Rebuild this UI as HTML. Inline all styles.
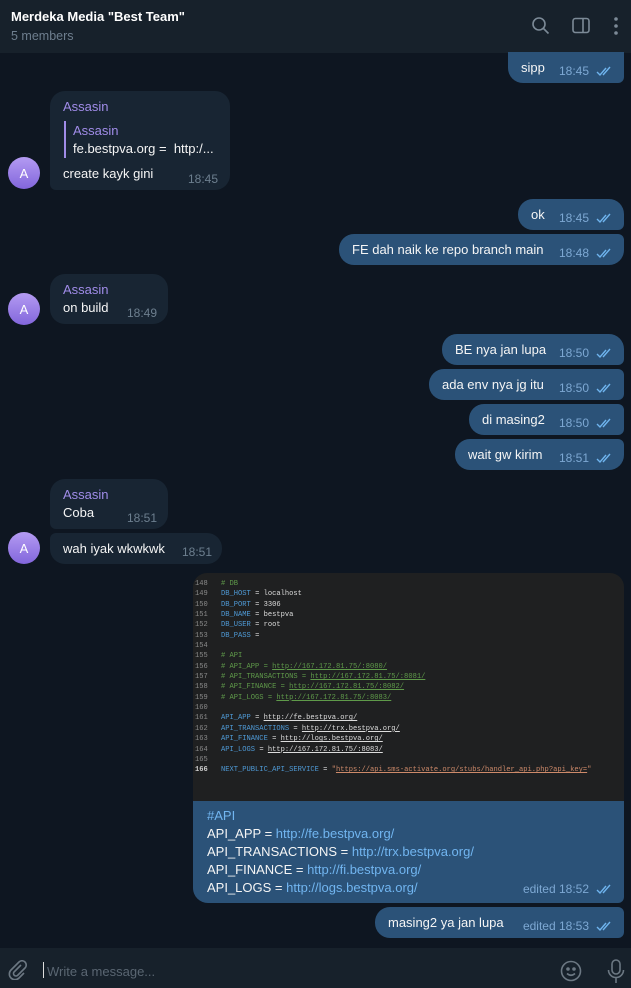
<!DOCTYPE html>
<html><head><meta charset="utf-8"><style>
*{margin:0;padding:0;box-sizing:border-box}
body{width:631px;height:988px;background:#0e1621;font-family:"Liberation Sans",sans-serif;position:relative;overflow:hidden;color:#f5f5f5}
.hdr{position:absolute;left:0;top:0;width:631px;height:53px;background:#17212b}
.b{position:absolute;height:31px;display:flex;align-items:center;font-size:13px;padding:0 10px 0 13px}
.out{background:#2b5278;border-radius:15px 6px 6px 15px;right:7px}
.in{background:#182533;border-radius:6px 15px 15px 6px;left:50px}
.t{margin-left:auto;font-size:12px;padding-top:7px;white-space:nowrap}
.out .t{color:#7da8d3}
.in .t{color:#6d7f8f}
.ck{margin-left:7px;margin-top:7px;width:18px;height:12px;flex:none}
.nm{color:#a08ce8;font-size:13px;position:absolute}
.av{position:absolute;left:8px;width:32px;height:32px;border-radius:50%;background:linear-gradient(#b49bf2,#8266dc);color:#fff;font-size:13px;display:flex;align-items:center;justify-content:center}
.code{position:absolute;left:193px;top:573px;width:431px;height:228px;background:#1f2021;border-radius:14px 14px 0 0;overflow:hidden;font-family:"Liberation Mono",monospace;font-size:7.1px;line-height:10.35px;padding-top:6px;white-space:pre}
.ln{position:absolute;left:2px;color:#8a8a8a}
.cd{position:absolute;left:28px;color:#ddd}
.k{color:#4f9ad6}.c{color:#5f9a4a}.u{text-decoration:underline}.s{color:#ce8a6a}
.cap{position:absolute;left:193px;top:801px;width:431px;height:102px;background:#2b5278;border-radius:0 0 6px 15px;font-size:13px;line-height:18px;padding:6px 14px}
.lk{color:#71b5f0}
</style></head><body>
<div class="hdr">
<div style="position:absolute;left:11px;top:9px;font-size:13px;font-weight:bold;color:#fff">Merdeka Media "Best Team"</div>
<div style="position:absolute;left:11px;top:29px;font-size:12.5px;color:#6e7e8e">5 members</div>
<svg style="position:absolute;left:531px;top:16px" width="20" height="20" viewBox="0 0 20 20" fill="none" stroke="#7c8a97" stroke-width="1.6"><circle cx="8" cy="8" r="6"/><path d="M12.5 12.5L17.5 17.5"/></svg>
<svg style="position:absolute;left:571px;top:16px" width="20" height="20" viewBox="0 0 20 20" fill="none" stroke="#7c8a97" stroke-width="1.6"><rect x="2" y="2.5" width="16" height="14" rx="2.5"/><path d="M12 2.5V16.5"/></svg>
<svg style="position:absolute;left:612px;top:16px" width="8" height="20" viewBox="0 0 8 20" fill="#7c8a97"><circle cx="4" cy="3" r="1.8"/><circle cx="4" cy="10" r="1.8"/><circle cx="4" cy="17" r="1.8"/></svg>
</div>

<div class="b out" style="top:52px;left:508px;border-radius:0 0 6px 15px">sipp<span class="t">18:45</span><svg class="ck" viewBox="0 0 18 12"><path d="M1 7l3 3L10 3M7 10L14 2" stroke="#6fb4ee" stroke-width="1.4" fill="none"/></svg></div>

<div class="in" style="position:absolute;top:91px;left:50px;width:180px;height:99px;border-radius:15px 15px 15px 6px">
<div class="nm" style="left:13px;top:8px">Assasin</div>
<div style="position:absolute;left:14px;top:30px;width:2px;height:37px;background:#a08ce8"></div>
<div class="nm" style="left:23px;top:32px">Assasin</div>
<div style="position:absolute;left:23px;top:50px;font-size:13px">fe.bestpva.org =&nbsp; http:/...</div>
<div style="position:absolute;left:13px;top:75px;font-size:13px">create kayk gini</div>
<div style="position:absolute;left:138px;top:81px;font-size:12px;color:#6d7f8f">18:45</div>
</div>
<div class="av" style="top:157px">A</div>

<div class="b out" style="top:199px;left:518px;border-radius:15px 15px 6px 15px">ok<span class="t">18:45</span><svg class="ck" viewBox="0 0 18 12"><path d="M1 7l3 3L10 3M7 10L14 2" stroke="#6fb4ee" stroke-width="1.4" fill="none"/></svg></div>
<div class="b out" style="top:234px;left:339px;border-radius:15px 6px 15px 15px">FE dah naik ke repo branch main<span class="t">18:48</span><svg class="ck" viewBox="0 0 18 12"><path d="M1 7l3 3L10 3M7 10L14 2" stroke="#6fb4ee" stroke-width="1.4" fill="none"/></svg></div>

<div class="in" style="position:absolute;top:274px;left:50px;width:118px;height:50px;border-radius:15px">
<div class="nm" style="left:13px;top:8px">Assasin</div>
<div style="position:absolute;left:13px;top:26px;font-size:13px">on build</div>
<div style="position:absolute;left:77px;top:32px;font-size:12px;color:#6d7f8f">18:49</div>
</div>
<div class="av" style="top:293px">A</div>

<div class="b out" style="top:334px;left:442px;border-radius:15px 15px 6px 15px">BE nya jan lupa<span class="t">18:50</span><svg class="ck" viewBox="0 0 18 12"><path d="M1 7l3 3L10 3M7 10L14 2" stroke="#6fb4ee" stroke-width="1.4" fill="none"/></svg></div>
<div class="b out" style="top:369px;left:429px">ada env nya jg itu<span class="t">18:50</span><svg class="ck" viewBox="0 0 18 12"><path d="M1 7l3 3L10 3M7 10L14 2" stroke="#6fb4ee" stroke-width="1.4" fill="none"/></svg></div>
<div class="b out" style="top:404px;left:469px">di masing2<span class="t">18:50</span><svg class="ck" viewBox="0 0 18 12"><path d="M1 7l3 3L10 3M7 10L14 2" stroke="#6fb4ee" stroke-width="1.4" fill="none"/></svg></div>
<div class="b out" style="top:439px;left:455px;border-radius:15px 6px 15px 15px">wait gw kirim<span class="t">18:51</span><svg class="ck" viewBox="0 0 18 12"><path d="M1 7l3 3L10 3M7 10L14 2" stroke="#6fb4ee" stroke-width="1.4" fill="none"/></svg></div>

<div class="in" style="position:absolute;top:479px;left:50px;width:118px;height:50px;border-radius:15px 15px 15px 6px">
<div class="nm" style="left:13px;top:8px">Assasin</div>
<div style="position:absolute;left:13px;top:26px;font-size:13px">Coba</div>
<div style="position:absolute;left:77px;top:32px;font-size:12px;color:#6d7f8f">18:51</div>
</div>
<div class="b in" style="top:533px;width:172px;border-radius:6px 15px 15px 15px">wah iyak wkwkwk<span class="t">18:51</span></div>
<div class="av" style="top:532px">A</div>

<div class="code"><div class="ln">148
149
150
151
152
153
154
155
156
157
158
159
160
161
162
163
164
165
<b style="color:#ccc">166</b></div><div class="cd"><span class="c"># DB</span>
<span class="k">DB_HOST</span> = localhost
<span class="k">DB_PORT</span> = 3306
<span class="k">DB_NAME</span> = bestpva
<span class="k">DB_USER</span> = root
<span class="k">DB_PASS</span> =

<span class="c"># API</span>
<span class="c"># API_APP = <span class="u">http://167.172.81.75/:8080/</span></span>
<span class="c"># API_TRANSACTIONS = <span class="u">http://167.172.81.75/:8081/</span></span>
<span class="c"># API_FINANCE = <span class="u">http://167.172.81.75/:8082/</span></span>
<span class="c"># API_LOGS = <span class="u">http://167.172.81.75/:8083/</span></span>

<span class="k">API_APP</span> = <span class="u">http://fe.bestpva.org/</span>
<span class="k">API_TRANSACTIONS</span> = <span class="u">http://trx.bestpva.org/</span>
<span class="k">API_FINANCE</span> = <span class="u">http://logs.bestpva.org/</span>
<span class="k">API_LOGS</span> = <span class="u">http://167.172.81.75/:8083/</span>

<span class="k">NEXT_PUBLIC_API_SERVICE</span> = <span class="s">"<span class="u">https://api.sms-activate.org/stubs/handler_api.php?api_key=</span>"</span></div></div>
<div class="cap"><span class="lk">#API</span><br>API_APP = <span class="lk">http://fe.bestpva.org/</span><br>API_TRANSACTIONS = <span class="lk">http://trx.bestpva.org/</span><br>API_FINANCE = <span class="lk">http://fi.bestpva.org/</span><br>API_LOGS = <span class="lk">http://logs.bestpva.org/</span>
<div style="position:absolute;right:10px;bottom:5px;display:flex;align-items:center;font-size:12px;color:#7da8d3">edited 18:52<svg style="margin-left:7px;width:18px;height:12px" viewBox="0 0 18 12"><path d="M1 7l3 3L10 3M7 10L14 2" stroke="#6fb4ee" stroke-width="1.4" fill="none"/></svg></div></div>

<div class="b out" style="top:907px;left:375px;border-radius:15px 6px 6px 15px">masing2 ya jan lupa<span class="t">edited 18:53</span><svg class="ck" viewBox="0 0 18 12"><path d="M1 7l3 3L10 3M7 10L14 2" stroke="#6fb4ee" stroke-width="1.4" fill="none"/></svg></div>

<div style="position:absolute;left:0;top:948px;width:631px;height:40px;background:#17212b">
<svg style="position:absolute;left:8px;top:12px" width="20" height="20" viewBox="0 0 20 20" fill="none" stroke="#6c7883" stroke-width="1.6"><path d="M13 5L6 12a2.5 2.5 0 0 0 3.5 3.5L17 8a4 4 0 0 0-6-6L3 10a5.5 5.5 0 0 0 8 8l5-5"/></svg>
<div style="position:absolute;left:43px;top:14px;width:1px;height:16px;background:#ddd"></div>
<div style="position:absolute;left:47px;top:16px;font-size:13px;color:#5a6672">Write a message...</div>
<svg style="position:absolute;left:560px;top:12px" width="22" height="22" viewBox="0 0 22 22" fill="none" stroke="#6c7883" stroke-width="1.6"><circle cx="11" cy="11" r="9.5"/><circle cx="8" cy="9" r="1" fill="#6c7883"/><circle cx="14" cy="9" r="1" fill="#6c7883"/><path d="M7 13.5q4 3.5 8 0"/></svg>
<svg style="position:absolute;left:606px;top:11px" width="20" height="26" viewBox="0 0 20 26" fill="none" stroke="#6c7883" stroke-width="1.6"><rect x="6" y="1" width="8" height="14" rx="4"/><path d="M2.5 11a7.5 7.5 0 0 0 15 0M10 19v5"/></svg>
</div>
</body></html>
